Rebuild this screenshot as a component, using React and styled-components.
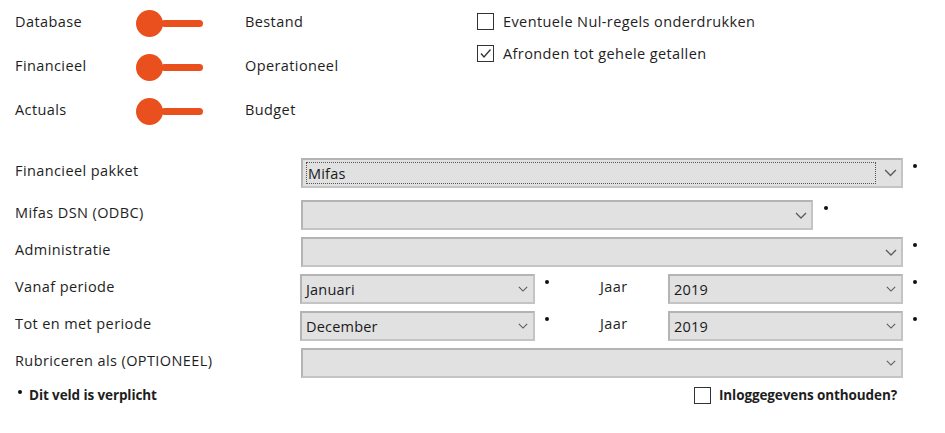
import React from 'react'
import styled, { createGlobalStyle } from 'styled-components'

const GlobalStyle = createGlobalStyle`
    body {
        margin: 0;
        background: #ffffff;
        font-family: "Open Sans", "Noto Sans", sans-serif;
        font-size: 14.5px;
        letter-spacing: 0.4px;
        color: #1e1e1e;
    }
`

const Page = styled.div`
    width: 945px;
    height: 433px;
    position: relative;
    overflow: hidden;
`

const Top = styled.div`
    display: flex;
    padding: 0 0 0 15px;
`

const SwitchGrid = styled.div`
    display: grid;
    grid-template-columns: 121px 109px 120px;
    grid-auto-rows: 44px;
    margin-top: -1px;
    width: 462px;
`

const Label = styled.div`
    display: flex;
    align-items: center;
    white-space: nowrap;
`

const Toggle = styled.div`
    display: flex;
    align-items: center;
    padding-top: 4px;
    .knob{
        width: 27px;
        height: 27px;
        border-radius: 50%;
        background: #e9501e;
    }
    .bar{
        width: 42px;
        height: 7px;
        margin-left: -2px;
        border-radius: 4px;
        background: #e9501e;
    }
`

const Options = styled.div`
    display: flex;
    flex-direction: column;
    gap: 13px;
    padding-top: 12px;
`

const CheckRow = styled.label`
    display: flex;
    align-items: center;
    gap: ${p => (p.$bold ? 8 : 9)}px;
    font-weight: ${p => (p.$bold ? 700 : 400)};
`

const Box = styled.span`
    width: 15px;
    height: 15px;
    border: 1px solid #333333;
    background: #ffffff;
    display: flex;
    align-items: center;
    justify-content: center;
`

const Form = styled.div`
    display: flex;
    flex-direction: column;
    margin-top: 27px;
    padding-left: 15px;
`

const Row = styled.div`
    display: flex;
    align-items: flex-start;
    height: ${p => p.$h || 37}px;
`

const RowLabel = styled.div`
    width: ${p => p.$w || 286}px;
    height: 30px;
    display: flex;
    align-items: center;
    margin-top: -3px;
    white-space: nowrap;
`

const Select = styled.div`
    width: ${p => p.$w}px;
    height: 30px;
    box-sizing: border-box;
    border: 2px solid #c4c4c4;
    border-top-color: #b4b4b4;
    border-left-color: #b4b4b4;
    background: #e1e1e1;
    display: flex;
    align-items: center;
    justify-content: space-between;
    padding: 0 ${p => (p.$small ? 5 : 4)}px 0 3px;
    letter-spacing: 0.2px;
    .value{
        padding-left: 1px;
        height: 22px;
        display: flex;
        align-items: center;
        color: #1a1a1a;
    }
    .value.focus{
        flex: 1;
        margin-right: 8px;
        border: 1px dotted #555555;
        padding-left: 1px;
        box-sizing: border-box;
    }
`

const Req = styled.span`
    width: 4px;
    height: 4px;
    border-radius: 50%;
    background: #111111;
    margin: 6px 0 0 ${p => p.$gap || 10}px;
    flex-shrink: 0;
`

const Jaar = styled.div`
    width: 68px;
    height: 30px;
    display: flex;
    align-items: center;
    margin-left: 51px;
    margin-top: -3px;
`

const Footer = styled.div`
    display: flex;
    align-items: center;
    justify-content: space-between;
    padding: 5px 48px 0 18px;
    font-weight: 700;
    font-size: 13.5px;
    letter-spacing: -0.1px;
    .note{
        display: flex;
        align-items: center;
        gap: 7px;
    }
    .dot{
        width: 4px;
        height: 4px;
        border-radius: 50%;
        background: #111111;
        margin-top: -7px;
    }
`

const Chevron = ({ size = 12 }) => (
    <svg width={size} height={size / 2 + 1} viewBox="0 0 12 7" fill="none">
        <path d="M1 1 L6 6 L11 1" stroke="#5a5a5a" strokeWidth="1.3" />
    </svg>
)

const CheckMark = () => (
    <svg width="13" height="13" viewBox="0 0 13 13" fill="none">
        <path d="M2 6.5 L5 10 L11.5 2.5" stroke="#333333" strokeWidth="1.3" />
    </svg>
)

const switches = [
    ['Database', 'Bestand'],
    ['Financieel', 'Operationeel'],
    ['Actuals', 'Budget'],
]

const App = () => {
    return (
        <Page>
            <GlobalStyle />
            <Top>
                <SwitchGrid>
                    {switches.map(([left, right]) => (
                        <React.Fragment key={left}>
                            <Label>{left}</Label>
                            <Toggle>
                                <div className="knob" />
                                <div className="bar" />
                            </Toggle>
                            <Label>{right}</Label>
                        </React.Fragment>
                    ))}
                </SwitchGrid>
                <Options>
                    <CheckRow>
                        <Box />
                        Eventuele Nul-regels onderdrukken
                    </CheckRow>
                    <CheckRow>
                        <Box><CheckMark /></Box>
                        Afronden tot gehele getallen
                    </CheckRow>
                </Options>
            </Top>

            <Form>
                <Row $h={42}>
                    <RowLabel>Financieel pakket</RowLabel>
                    <Select $w={602}>
                        <span className="value focus">Mifas</span>
                        <Chevron size={13} />
                    </Select>
                    <Req />
                </Row>
                <Row>
                    <RowLabel>Mifas DSN (ODBC)</RowLabel>
                    <Select $w={512}>
                        <span className="value" />
                        <Chevron />
                    </Select>
                    <Req $gap={11} />
                </Row>
                <Row>
                    <RowLabel>Administratie</RowLabel>
                    <Select $w={602}>
                        <span className="value" />
                        <Chevron />
                    </Select>
                    <Req />
                </Row>
                <Row>
                    <RowLabel $w={285}>Vanaf periode</RowLabel>
                    <Select $w={235} $small>
                        <span className="value">Januari</span>
                        <Chevron size={10} />
                    </Select>
                    <Req />
                    <Jaar>Jaar</Jaar>
                    <Select $w={235} $small>
                        <span className="value">2019</span>
                        <Chevron size={10} />
                    </Select>
                    <Req />
                </Row>
                <Row>
                    <RowLabel $w={285}>Tot en met periode</RowLabel>
                    <Select $w={235} $small>
                        <span className="value">December</span>
                        <Chevron size={10} />
                    </Select>
                    <Req />
                    <Jaar>Jaar</Jaar>
                    <Select $w={235} $small>
                        <span className="value">2019</span>
                        <Chevron size={10} />
                    </Select>
                    <Req />
                </Row>
                <Row $h={33}>
                    <RowLabel>Rubriceren als (OPTIONEEL)</RowLabel>
                    <Select $w={602} $small>
                        <span className="value" />
                        <Chevron size={10} />
                    </Select>
                </Row>
            </Form>

            <Footer>
                <div className="note">
                    <span className="dot" />
                    Dit veld is verplicht
                </div>
                <CheckRow $bold>
                    <Box />
                    Inloggegevens onthouden?
                </CheckRow>
            </Footer>
        </Page>
    )
}

export default App
